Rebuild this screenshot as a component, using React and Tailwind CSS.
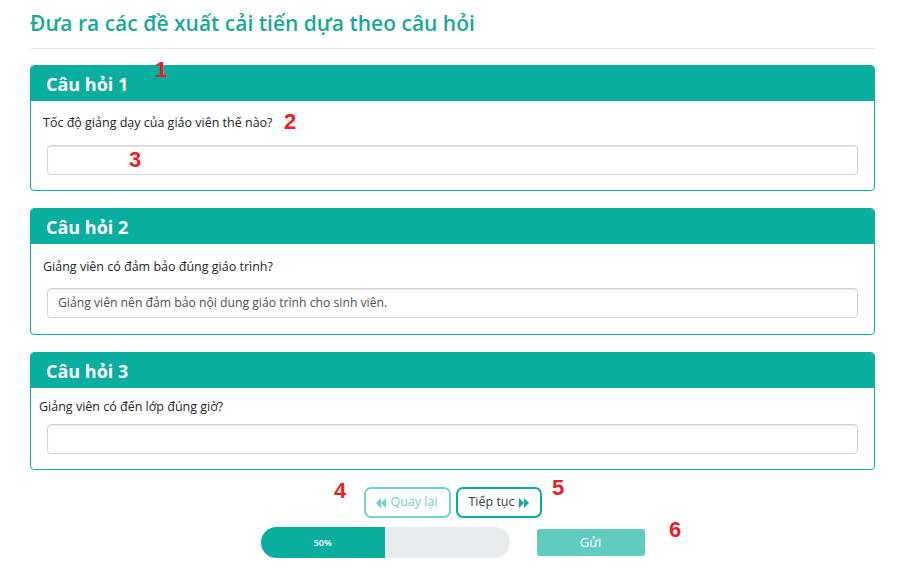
import React from 'react';

function BackIcon({ className }) {
    return (
        <svg viewBox="0 0 10 10" className={className} fill="currentColor">
            <path d="M5 0 L0 5 L5 10 Z" />
            <path d="M10 0 L5 5 L10 10 Z" />
        </svg>
    );
}

function ForwardIcon({ className }) {
    return (
        <svg viewBox="0 0 10 10" className={className} fill="currentColor">
            <path d="M0 0 L5 5 L0 10 Z" />
            <path d="M5 0 L10 5 L5 10 Z" />
        </svg>
    );
}

function QuestionCard({ title, question, value, bodyClass, questionClass, inputClass }) {
    return (
        <div className="border border-[#0aae9e] rounded-[4px] overflow-hidden">
            <div className="h-[35px] bg-[#0aae9e] flex items-center px-[15px]">
                <span className="text-white text-[18px] font-bold leading-none pt-[1px]">{title}</span>
            </div>
            <div className={bodyClass}>
                <div className={`text-[12.5px] leading-[20px] text-[#212529] ${questionClass}`}>{question}</div>
                <div className={`h-[30px] border border-[#ced4da] rounded-[4px] shadow-[inset_0_1px_1px_rgba(0,0,0,0.08)] flex items-center px-[10px] text-[12.2px] text-[#495057] ${inputClass}`}>
                    {value}
                </div>
            </div>
        </div>
    );
}

export default function App() {
    return (
        <div className="w-[903px] h-[571px] bg-white relative overflow-hidden px-[30px] font-['Open_Sans','Noto_Sans',sans-serif]">
            {/* Heading */}
            <div className="pt-[8px] pb-[10px] border-b border-[#e6e8ea] w-[845px]">
                <h1 className="text-[21px] leading-[30px] font-semibold text-[#1aa89a]">
                    Đưa ra các đề xuất cải tiến dựa theo câu hỏi
                </h1>
            </div>

            <div className="w-[845px] mt-[16px] flex flex-col gap-[17px]">
                <QuestionCard
                    title="Câu hỏi 1"
                    question="Tốc độ giảng dạy của giáo viên thế nào?"
                    value=""
                    bodyClass="pt-[12px] pb-[15px] px-[16px]"
                    questionClass="-ml-[4px]"
                    inputClass="mt-[12px]"
                />
                <QuestionCard
                    title="Câu hỏi 2"
                    question="Giảng viên có đảm bảo đúng giáo trình?"
                    value="Giảng viên nên đảm bảo nội dung giáo trình cho sinh viên."
                    bodyClass="pt-[13px] pb-[16px] px-[16px]"
                    questionClass="-ml-[4px]"
                    inputClass="mt-[11px]"
                />
                <QuestionCard
                    title="Câu hỏi 3"
                    question="Giảng viên có đến lớp đúng giờ?"
                    value=""
                    bodyClass="pt-[9px] pb-[15px] px-[16px]"
                    questionClass="-ml-[8px]"
                    inputClass="mt-[7px]"
                />
            </div>

            {/* Navigation */}
            <div className="w-[845px] flex justify-center gap-[5px] mt-[17px]">
                <button className="w-[87px] h-[31px] rounded-[7px] border-2 border-[#74d3c9] flex items-center justify-center gap-[4px] text-[12.5px] text-[#6fd0c5]">
                    <BackIcon className="w-[10px] h-[10px] shrink-0" />
                    <span>Quay lại</span>
                </button>
                <button className="w-[86px] h-[31px] rounded-[7px] border-2 border-[#0aae9e] flex items-center justify-center gap-[4px] text-[12.5px] text-[#343a40]">
                    <span>Tiếp tục</span>
                    <ForwardIcon className="w-[10px] h-[10px] shrink-0 text-[#0aae9e]" />
                </button>
            </div>

            <div className="w-[845px] flex justify-center items-center gap-[27px] mt-[9px]">
                <div className="w-[249px] h-[31px] rounded-full bg-[#e9ecef] overflow-hidden flex">
                    <div className="w-1/2 h-full bg-[#0aae9e] flex items-center justify-center text-white text-[9px] font-semibold">
                        50%
                    </div>
                </div>
                <button className="w-[108px] h-[27px] rounded-[3px] bg-[#60cbbf] text-white text-[13px]">
                    Gửi
                </button>
            </div>

            {/* Annotation numbers */}
            <span className="absolute left-[155px] top-[59px] text-[22px] leading-[22px] font-bold text-[#ec1c24] font-['Liberation_Sans',sans-serif]">1</span>
            <span className="absolute left-[284px] top-[111px] text-[22px] leading-[22px] font-bold text-[#ec1c24] font-['Liberation_Sans',sans-serif]">2</span>
            <span className="absolute left-[129px] top-[149px] text-[22px] leading-[22px] font-bold text-[#ec1c24] font-['Liberation_Sans',sans-serif]">3</span>
            <span className="absolute left-[334px] top-[480px] text-[22px] leading-[22px] font-bold text-[#ec1c24] font-['Liberation_Sans',sans-serif]">4</span>
            <span className="absolute left-[552px] top-[477px] text-[22px] leading-[22px] font-bold text-[#ec1c24] font-['Liberation_Sans',sans-serif]">5</span>
            <span className="absolute left-[669px] top-[519px] text-[22px] leading-[22px] font-bold text-[#ec1c24] font-['Liberation_Sans',sans-serif]">6</span>
        </div>
    );
}
